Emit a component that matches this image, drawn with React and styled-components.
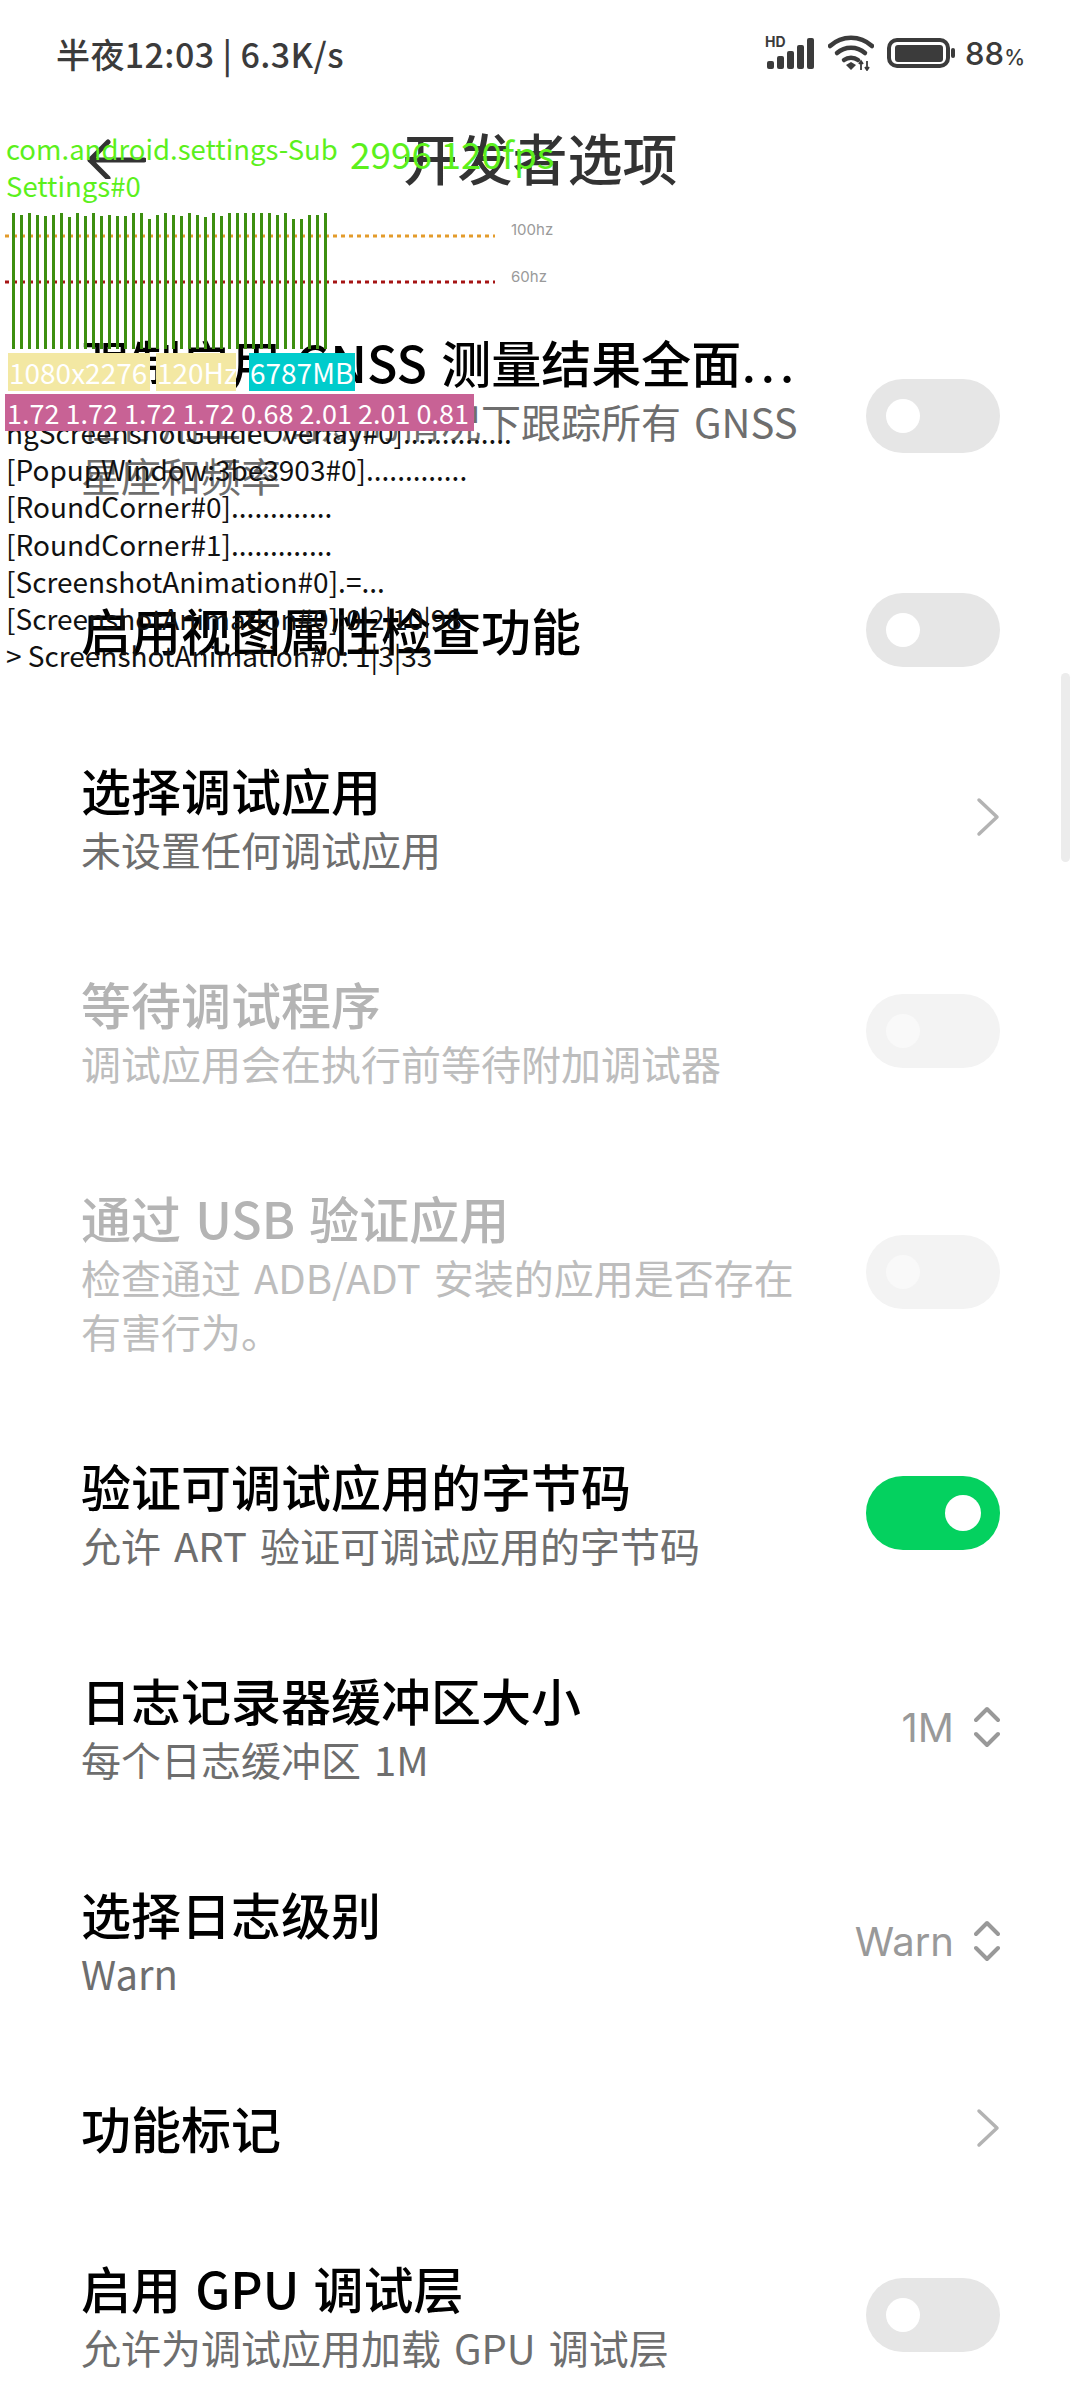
import React from 'react';
import styled, { createGlobalStyle } from 'styled-components';

const GlobalStyle = createGlobalStyle`
  html, body {
    margin: 0;
    padding: 0;
    background: #fff;
  }
`;

const cjk = `"Noto Sans CJK SC", "Noto Sans", sans-serif`;

const Screen = styled.div`
  position: relative;
  width: 1080px;
  height: 2400px;
  overflow: hidden;
  background: #fff;
  font-family: ${cjk};
`;

const StatusBar = styled.div`
  display: flex;
  align-items: center;
  justify-content: space-between;
  height: 106px;
  padding: 0 55px 0 56px;
  box-sizing: border-box;
  color: #3b3b3b;
`;

const StatusText = styled.div`
  font-size: 34px;
  font-weight: 500;
  letter-spacing: 0.4px;
  white-space: nowrap;
`;

const StatusIcons = styled.div`
  display: flex;
  align-items: center;
  gap: 13px;
`;

const Percent = styled.div`
  display: flex;
  align-items: baseline;
  margin-left: -3px;
  font-family: Inter, sans-serif;
  font-size: 31px;
  font-weight: 500;
  span {
    font-size: 21px;
  }
`;

const ActionBar = styled.div`
  position: relative;
  display: flex;
  align-items: center;
  justify-content: center;
  height: 104px;
  padding-bottom: 5px;
  box-sizing: border-box;
  color: #333;
`;

const BackArrow = styled.svg`
  position: absolute;
  left: 86px;
  top: 33px;
`;

const PageTitle = styled.h1`
  margin: 0;
  font-size: 55px;
  font-weight: 500;
`;

const List = styled.div`
  display: flex;
  flex-direction: column;
  padding-top: 72px;
`;

const RowBox = styled.div`
  display: flex;
  align-items: center;
  padding: 48px 80px 48px 81px;
`;

const RowText = styled.div`
  width: 724px;
  flex: none;
`;

const RowTitle = styled.div`
  font-size: 50px;
  line-height: 62px;
  font-weight: 500;
  word-spacing: 3px;
  white-space: nowrap;
  margin-bottom: 2px;
  color: ${p => (p.$disabled ? '#b4b4b4' : '#000')};
`;

const Dots = styled.span`
  font-family: Inter, sans-serif;
  line-height: 0;
  letter-spacing: 4px;
`;

const RowSub = styled.div`
  font-size: 40px;
  line-height: 54px;
  word-spacing: 4px;
  color: ${p => (p.$disabled ? '#bdbdbd' : '#6e6e6e')};
`;

const RowEnd = styled.div`
  display: flex;
  flex: 1;
  height: 0;
  align-items: center;
  justify-content: flex-end;
  gap: 20px;
  white-space: nowrap;
`;

const Track = styled.div`
  display: flex;
  flex: none;
  align-items: center;
  justify-content: ${p => (p.$on ? 'flex-end' : 'flex-start')};
  width: 134px;
  height: 74px;
  padding: 0 ${p => (p.$on ? '19px' : '20px')};
  box-sizing: border-box;
  border-radius: 37px;
  background: ${p => (p.$on ? '#04d15f' : p.$disabled ? '#f3f3f3' : '#e6e6e6')};
`;

const Knob = styled.div`
  width: ${p => (p.$on ? '36px' : '34px')};
  height: ${p => (p.$on ? '36px' : '34px')};
  border-radius: 50%;
  background: ${p => (p.$disabled ? '#f9f9f9' : '#fff')};
`;

const SpinValue = styled.div`
  font-family: Inter, sans-serif;
  font-size: 40px;
  color: #999;
`;

const Scrollbar = styled.div`
  position: absolute;
  left: 1061px;
  top: 673px;
  width: 9px;
  height: 189px;
  border-radius: 5px;
  background: #ececec;
`;

const Overlay = styled.div`
  position: absolute;
  top: 130px;
  left: 0;
  width: 700px;
  display: flex;
  flex-direction: column;
`;

const AppLine = styled.div`
  display: flex;
  align-items: flex-start;
  height: 75px;
  padding-left: 6px;
  color: #5cf01c;
`;

const AppName = styled.div`
  width: 344px;
  flex: none;
  font-size: 27.5px;
  line-height: 37px;
  white-space: nowrap;
`;

const Fps = styled.div`
  font-size: 37px;
  line-height: 46px;
  white-space: nowrap;
`;

const FrameChart = styled.svg`
  display: block;
`;

const BadgeRow = styled.div`
  display: flex;
  height: 38px;
  margin: 4px 0 0 8px;
`;

const Badge = styled.div`
  width: ${p => p.$width}px;
  margin-right: ${p => p.$gap || 0}px;
  flex: none;
  overflow: hidden;
  font-size: 28px;
  line-height: 38px;
  padding-left: 1px;
  box-sizing: border-box;
  color: #fff;
  white-space: nowrap;
  background: ${p => p.$bg};
`;

const LoadBar = styled.div`
  position: relative;
  z-index: 1;
  width: 469px;
  height: 37px;
  margin: 3px 0 0 5px;
  padding-left: 2px;
  box-sizing: border-box;
  font-size: 27px;
  line-height: 37px;
  color: #fff;
  white-space: nowrap;
  background: #c86295;
`;

const LayerList = styled.div`
  margin-top: -17px;
  padding-left: 6px;
  font-size: 28px;
  line-height: 37.2px;
  color: #111;
  white-space: nowrap;
`;

const frameOffsets = [
  0, 2, 0, 2, 3, 2, 0, 4, 0, 3, 0, 3, 2, 3, 3, 0, 0, 6, 2, 0,
  2, 3, 0, 2, 4, 0, 3, 0, 0, 0, 0, 0, 0, 2, 0, 6, 6, 2, 2, 0,
];

const Chevron = () => (
  <svg width="24" height="40" viewBox="0 0 24 40">
    <path d="M3 3 L21 20 L3 37" fill="none" stroke="#b3b3b3" strokeWidth="3.5" strokeLinecap="round" strokeLinejoin="round" />
  </svg>
);

const SpinIcon = () => (
  <svg width="26" height="42" viewBox="0 0 26 42">
    <path d="M2 14 L13 3 L24 14 M2 28 L13 39 L24 28" fill="none" stroke="#999" strokeWidth="4" strokeLinecap="round" strokeLinejoin="round" />
  </svg>
);

const Toggle = ({ on, disabled }) => (
  <Track $on={on} $disabled={disabled}>
    <Knob $on={on} $disabled={disabled} />
  </Track>
);

const Row = ({ title, sub, disabled, end }) => (
  <RowBox>
    <RowText>
      <RowTitle $disabled={disabled}>{title}</RowTitle>
      {sub && <RowSub $disabled={disabled}>{sub}</RowSub>}
    </RowText>
    <RowEnd>{end}</RowEnd>
  </RowBox>
);

const SignalIcon = () => (
  <svg width="50" height="36" viewBox="0 0 50 36">
    <text x="0" y="12" fontFamily="Inter, sans-serif" fontSize="14" fontWeight="700" fill="#3b3b3b">HD</text>
    <g fill="#3b3b3b">
      <rect x="2" y="26" width="7" height="8" rx="2" />
      <rect x="12" y="21" width="7" height="13" rx="2" />
      <rect x="22" y="16" width="7" height="18" rx="2" />
      <rect x="32" y="10" width="7" height="24" rx="2" />
      <rect x="42" y="3" width="7" height="31" rx="2" />
    </g>
  </svg>
);

const WifiIcon = () => (
  <svg width="46" height="36" viewBox="0 0 46 36">
    <g fill="none" stroke="#3b3b3b" strokeWidth="4.5" strokeLinecap="round">
      <path d="M2 11 C14 0 32 0 44 11" />
      <path d="M9 18 C17 11 29 11 37 18" />
      <path d="M16 25 C20 22 26 22 30 25" />
    </g>
    <path d="M18 30 L23 27 L28 30 L23 35 Z" fill="#3b3b3b" />
    <path d="M33 35 V27 M31 29 L33 26 L35 29 M39 26 V34 M37 32 L39 35 L41 32" fill="none" stroke="#3b3b3b" strokeWidth="1.8" />
  </svg>
);

const BatteryIcon = () => (
  <svg width="68" height="30" viewBox="0 0 68 30">
    <rect x="2" y="2" width="59" height="26" rx="8" fill="none" stroke="#3b3b3b" strokeWidth="4" />
    <rect x="8" y="7" width="48" height="17" rx="3" fill="#3b3b3b" />
    <rect x="64" y="10" width="4" height="10" rx="2" fill="#3b3b3b" />
  </svg>
);

const App = () => (
  <Screen>
    <GlobalStyle />
    <StatusBar>
      <StatusText>半夜12:03 | 6.3K/s</StatusText>
      <StatusIcons>
        <SignalIcon />
        <WifiIcon />
        <BatteryIcon />
        <Percent>88<span>%</span></Percent>
      </StatusIcons>
    </StatusBar>
    <ActionBar>
      <BackArrow width="60" height="40" viewBox="0 0 60 40">
        <path d="M58 21 H4 M22 3 L4 21 L22 39" fill="none" stroke="#333" strokeWidth="5" strokeLinecap="round" strokeLinejoin="round" />
      </BackArrow>
      <PageTitle>开发者选项</PageTitle>
    </ActionBar>
    <List>
      <Row
        title={<>强制启用 GNSS 测量结果全面<Dots>...</Dots></>}
        sub="在停用工作周期的情况下跟踪所有 GNSS 星座和频率"
        end={<Toggle />}
      />
      <Row title="启用视图属性检查功能" end={<Toggle />} />
      <Row title="选择调试应用" sub="未设置任何调试应用" end={<Chevron />} />
      <Row title="等待调试程序" sub="调试应用会在执行前等待附加调试器" disabled end={<Toggle disabled />} />
      <Row title="通过 USB 验证应用" sub="检查通过 ADB/ADT 安装的应用是否存在有害行为。" disabled end={<Toggle disabled />} />
      <Row title="验证可调试应用的字节码" sub="允许 ART 验证可调试应用的字节码" end={<Toggle on />} />
      <Row title="日志记录器缓冲区大小" sub="每个日志缓冲区 1M" end={<><SpinValue>1M</SpinValue><SpinIcon /></>} />
      <Row title="选择日志级别" sub="Warn" end={<><SpinValue>Warn</SpinValue><SpinIcon /></>} />
      <Row title="功能标记" end={<Chevron />} />
      <Row title="启用 GPU 调试层" sub="允许为调试应用加载 GPU 调试层" end={<Toggle />} />
    </List>
    <Scrollbar />
    <Overlay>
      <AppLine>
        <AppName>com.android.settings-Sub<br />Settings#0</AppName>
        <Fps>2996 120fps</Fps>
      </AppLine>
      <FrameChart width="560" height="144" viewBox="0 204 560 144">
        <line x1="5" y1="235" x2="495" y2="235" stroke="#e39b2b" strokeWidth="3" strokeDasharray="4 4" />
        <line x1="5" y1="281" x2="495" y2="281" stroke="#a51515" strokeWidth="3" strokeDasharray="4 4" />
        <text x="511" y="234" fontSize="15" fill="#9a9a9a" fontFamily="Inter, sans-serif">100hz</text>
        <text x="511" y="281" fontSize="15" fill="#9a9a9a" fontFamily="Inter, sans-serif">60hz</text>
        {frameOffsets.map((offset, i) => (
          <rect key={i} x={12 + i * 8} y={212 + offset} width="3" height={136 - offset} fill="#3d8f10" />
        ))}
      </FrameChart>
      <BadgeRow>
        <Badge $width={142} $gap={6} $bg="#f3e8a3">1080x2276</Badge>
        <Badge $width={80} $gap={13} $bg="#f3e8a3">120Hz</Badge>
        <Badge $width={106} $bg="#00cccc">6787MB</Badge>
      </BadgeRow>
      <LoadBar>1.72 1.72 1.72 1.72 0.68 2.01 2.01 0.81</LoadBar>
      <LayerList>
        <div>ngScreenshotGuideOverlay#0]..............</div>
        <div>[PopupWindow:3be3903#0].............</div>
        <div>[RoundCorner#0].............</div>
        <div>[RoundCorner#1].............</div>
        <div>[ScreenshotAnimation#0].=...</div>
        <div>[ScreenshotAnimation#0]:0|2|10|98</div>
        <div>&gt; ScreenshotAnimation#0: 1|3|33</div>
      </LayerList>
    </Overlay>
  </Screen>
);

export default App;
